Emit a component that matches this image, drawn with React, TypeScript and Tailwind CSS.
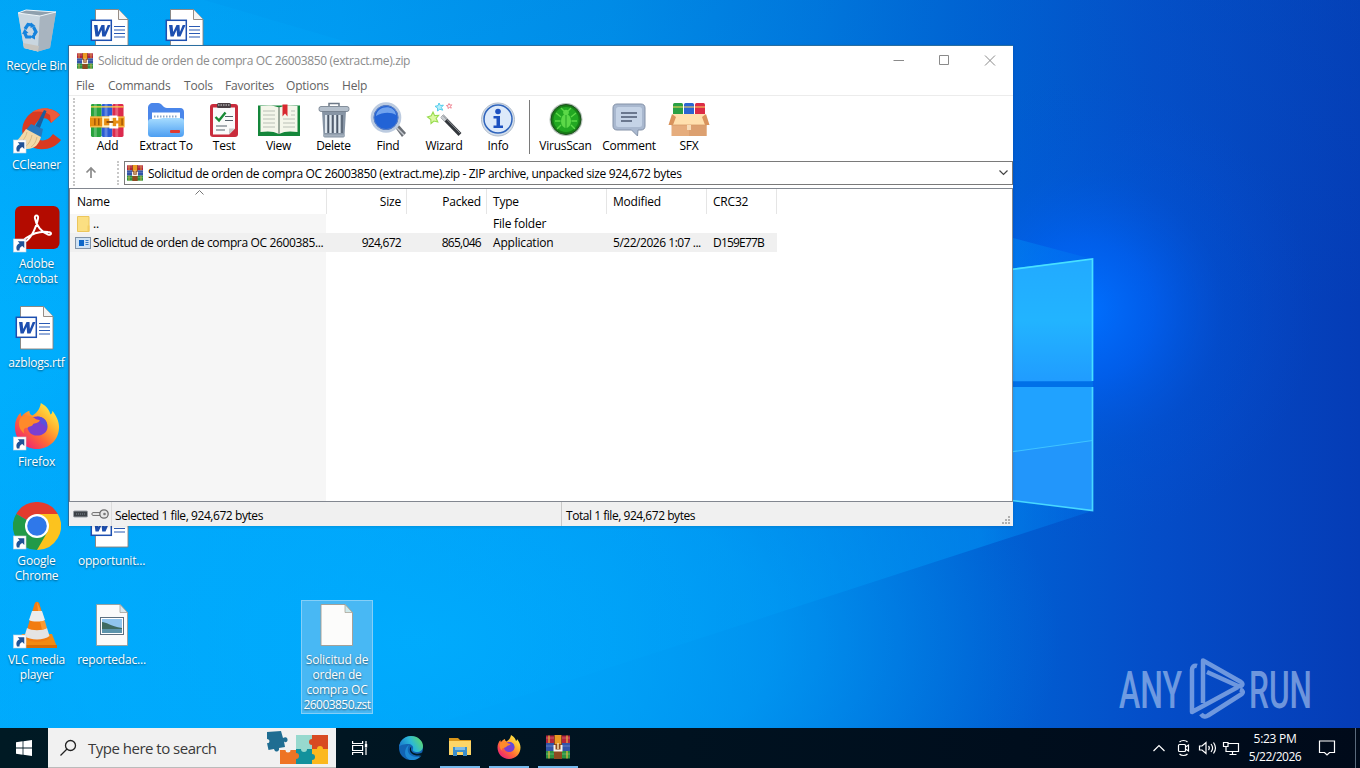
import type { ReactNode } from 'react';

/* ---------- desktop icons ---------- */

function Shortcut() {
  return (
    <g>
      <rect x="0.5" y="34" width="12.5" height="13" fill="#fff" stroke="#c8d4e0" strokeWidth="0.6" />
      <path d="M4 45.500c-1.500-4 .2-6 2.600-7.200L4.700 36.300h6.600v6.600l-2-2C7.300 41.800 6.300 43 6.500 45.500z" fill="#1f5296" />
    </g>
  );
}

function RecycleBin() {
  return (
    <svg width="48" height="48" viewBox="0 0 48 48">
      <path d="M5 6l8-3 30 2-6 36-12 3.500L11 41z" fill="#b9c6d2" opacity="0.9" />
      <path d="M5 6l22 3-2 35.500L11 41z" fill="#c9d6e0" />
      <path d="M27 9l16-4-6 36-12 3.500z" fill="#a8b4bf" />
      <path d="M5 6l8-3 30 2-16 4z" fill="#8fa0ae" />
      <path d="M5 6l8-3 30 2-16 4z" fill="none" stroke="#eef4f8" strokeWidth="1" />
      <path d="M10 36l16 3-1 5.500L11 41z" fill="#c6c4bf" />
      <g fill="none" stroke="#1583dd" strokeWidth="3.200">
        <path d="M12 22l3-4.500 4 .5" />
        <path d="M20.500 20l2.500 5-2 3" />
        <path d="M18 30h-4.500l-2-4.500" />
      </g>
      <path d="M18 15.500l4.500 3.500-5 2zM22 26l-5 4 5 2.500zM9 27l2.500-5 4 4z" fill="#1583dd" />
    </svg>
  );
}

function CCleaner() {
  return (
    <svg width="48" height="48" viewBox="0 0 48 48">
      <path d="M47 9C40 0 23 0 14 11c-7 9-6 20 1 27 8 8 25 7 33-4l-8-6c-6 8-13 8-17 3-4-6-2-13 3-17 5-3 9-2 12 3z" fill="#d93a20" />
      <path d="M47 9C40 1 28 0 19 6c5-1 14-1 18 3l1 8z" fill="#ee5c3a" />
      <path d="M31 4l2.500 1-7 18-4.500-2z" fill="#1c5d9c" />
      <path d="M18 18l12 5-2 9-15-8z" fill="#2878bd" />
      <path d="M13 23l15 8c-2 7-6 12-14 12-5 0-10-2-13-6 5-3 8-9 12-14z" fill="#f2d9a8" />
      <path d="M14 26c-1 5-4 9-8 12M19 29c-1 5-3 9-7 12M24 31c-1 5-3 8-6 10" stroke="#d8bb85" strokeWidth="1" fill="none" />
      <Shortcut />
    </svg>
  );
}

function Acrobat() {
  return (
    <svg width="48" height="48" viewBox="0 0 48 48">
      <rect x="2" y="1" width="44.500" height="43" rx="6" fill="#b30b00" />
      <path
        d="M13 33c-3 2-2 4.500 1 2.500 5-4 10-15 11-22 1-4-4-4-3 0 1 7 7 14 13 16 4 1 4-2.500 0-2.500-7-1-16 2-22 6z"
        fill="none"
        stroke="#fff"
        strokeWidth="2"
      />
      <Shortcut />
    </svg>
  );
}

function WordDoc() {
  return (
    <svg width="48" height="48" viewBox="0 0 48 48">
      <path d="M7.500 2.500h23l9.500 10v32.500H7.500z" fill="#fff" stroke="#8a8078" strokeWidth="0.900" />
      <path d="M30.500 2.500v10H40" fill="#f4f4f4" stroke="#8a8078" strokeWidth="0.900" />
      <path d="M26 19.500h11M26 23h11M26 26.500h11M26 30h11" stroke="#2a5ab4" strokeWidth="1.200" />
      <rect x="3.300" y="13.300" width="20" height="20" fill="#fff" stroke="#1d4fb0" strokeWidth="1.500" />
      <path d="M6 18h3.500l.7 7 3.300-7h3l.4 7 2.800-7H22.500l-5 11.500h-3.300l-.6-6.500-3 6.500H7.500z" fill="#1d4fb0" />
    </svg>
  );
}

function FirefoxLogo({ size }: { size: number }) {
  const id = `ff${size}`;
  return (
    <svg width={size} height={size} viewBox="0 0 48 48">
      <defs>
        <linearGradient id={id} x1="0.9" y1="0.1" x2="0.2" y2="0.9">
          <stop offset="0" stopColor="#fff04a" />
          <stop offset="0.35" stopColor="#ffb02e" />
          <stop offset="0.65" stopColor="#ff6a36" />
          <stop offset="1" stopColor="#f0286f" />
        </linearGradient>
      </defs>
      <path d="M28 0c7 4 9 8 10 12 2-1 2-3 2-4 4 5 7 11 7 17 0 13-10 23-23 23S1 38 1 25c0-6 2-11 6-15 0 2 0 3 1 4 2-3 5-5 8-6 0 3 1 4 3 5 4-2 8-6 9-13z" fill={`url(#${id})`} />
      <path d="M24 14c7 0 11 5 11 10.500S30.500 34 24 34s-10-4.500-10-10 4-10 10-10z" fill="#7a3fd0" />
      <path d="M24 14c8 0 12 6 10 13-1-3-3-5-6-6 0-3-2-5-4-7z" fill="#5a50dc" />
      <path d="M7 15c5-3 12-2 16 2l4 1c-1 3-6 3-7 4-1 3-4 2-6 4-3-1-5 2-3 6-5-4-8-10-4-17z" fill="#ff8a2a" />
    </svg>
  );
}

function Firefox() {
  return (
    <div className="relative h-12 w-12">
      <div className="pl-px">
        <FirefoxLogo size={46} />
      </div>
      <svg className="absolute top-0 left-0" width="48" height="48" viewBox="0 0 48 48">
        <Shortcut />
      </svg>
    </div>
  );
}

function Chrome() {
  return (
    <svg width="48" height="48" viewBox="0 0 48 48">
      <path d="M24 24L3.200 12A24 24 0 0 1 44.800 12z" fill="#e33b2e" />
      <path d="M24 24h-1L44.800 12A24 24 0 0 1 24 48l-2-4z" fill="#fcc31e" />
      <path d="M24 24l10.400 6L24 48A24 24 0 0 1 3.200 12z" fill="#229a48" />
      <path d="M24 12h20.800L34 30z" fill="#fcc31e" />
      <circle cx="24" cy="24" r="12" fill="#fff" />
      <circle cx="24" cy="24" r="9.800" fill="#2f78ea" />
      <Shortcut />
    </svg>
  );
}

function Vlc() {
  return (
    <svg width="48" height="48" viewBox="0 0 48 48">
      <path d="M9 33h30l5 13H3z" fill="#f28a12" />
      <path d="M3 44h41v3H3z" fill="#d86c05" />
      <path d="M21.500 3c1-3 4-3 5 0l10 34c-4 5-21 5-25 0z" fill="#f27c10" />
      <path d="M19 10h10l3 9c-3 2-13 2-16 0z" fill="#ececec" />
      <path d="M14 27c5 3 15 3 20 0l2.500 8c-5 4.500-20 4.500-25 0z" fill="#e4e4e4" />
      <path d="M24 1l4 9h-3zM27 20h5l2 7-5 2z" fill="#ffa640" opacity="0.7" />
      <Shortcut />
    </svg>
  );
}

function PicturePage() {
  return (
    <svg width="48" height="48" viewBox="0 0 48 48">
      <path d="M8.500 3.500h23.500l7.500 8v33h-31z" fill="#fafafa" stroke="#9a958e" strokeWidth="0.800" />
      <path d="M32 3.500v8h7.500z" fill="#d7e8ee" stroke="#9a958e" strokeWidth="0.700" />
      <rect x="12.500" y="16.500" width="23" height="17" fill="#fff" stroke="#5c6f80" strokeWidth="1" />
      <rect x="14" y="18" width="20" height="14" fill="#8fc4ee" />
      <path d="M14 21c4 0 8 4 20 6v2H14z" fill="#3e6a62" />
      <path d="M14 28h20v4H14z" fill="#5b93ab" />
    </svg>
  );
}

function BlankPage() {
  return (
    <svg width="48" height="48" viewBox="0 0 48 48">
      <path d="M8 3.500h24l7.500 8v33H8z" fill="#fcfcfb" stroke="#a39b8e" strokeWidth="0.900" />
      <path d="M32 3.500v8h7.500z" fill="#cfe9ea" stroke="#a39b8e" strokeWidth="0.700" />
    </svg>
  );
}

const desktopIcons: { cell: string; label: string[]; icon: ReactNode }[] = [
  { cell: 'col-start-1 row-start-1', label: ['Recycle Bin'], icon: <RecycleBin /> },
  { cell: 'col-start-1 row-start-2', label: ['CCleaner'], icon: <CCleaner /> },
  { cell: 'col-start-1 row-start-3', label: ['Adobe', 'Acrobat'], icon: <Acrobat /> },
  { cell: 'col-start-1 row-start-4', label: ['azblogs.rtf'], icon: <WordDoc /> },
  { cell: 'col-start-1 row-start-5', label: ['Firefox'], icon: <Firefox /> },
  { cell: 'col-start-1 row-start-6', label: ['Google', 'Chrome'], icon: <Chrome /> },
  { cell: 'col-start-1 row-start-7', label: ['VLC media', 'player'], icon: <Vlc /> },
  { cell: 'col-start-2 row-start-1', label: [], icon: <WordDoc /> },
  { cell: 'col-start-3 row-start-1', label: [], icon: <WordDoc /> },
  { cell: 'col-start-2 row-start-6', label: ['opportunit...'], icon: <WordDoc /> },
  { cell: 'col-start-2 row-start-7', label: ['reportedac...'], icon: <PicturePage /> },
];

/* ---------- wallpaper ---------- */

function Wallpaper() {
  return (
    <svg className="absolute inset-0" width="1360" height="768" viewBox="0 0 1360 768">
      <defs>
        <linearGradient id="base" x1="0" y1="0" x2="1" y2="0">
          <stop offset="0" stopColor="#00adfd" />
          <stop offset="0.25" stopColor="#00a3f8" />
          <stop offset="0.45" stopColor="#0092ec" />
          <stop offset="0.6" stopColor="#007ae0" />
          <stop offset="0.72" stopColor="#0062d4" />
          <stop offset="0.85" stopColor="#044dc8" />
          <stop offset="1" stopColor="#053cb6" />
        </linearGradient>
        <linearGradient id="shade" x1="0" y1="0" x2="0" y2="1">
          <stop offset="0" stopColor="#0060c0" stopOpacity="0.14" />
          <stop offset="0.4" stopColor="#0060c0" stopOpacity="0" />
        </linearGradient>
        <radialGradient id="floor" cx="0" cy="0" r="1" gradientUnits="userSpaceOnUse" gradientTransform="translate(420 640) scale(640 330)">
          <stop offset="0" stopColor="#00adff" stopOpacity="0.8" />
          <stop offset="0.55" stopColor="#00a6fc" stopOpacity="0.5" />
          <stop offset="1" stopColor="#0090f0" stopOpacity="0" />
        </radialGradient>
        <radialGradient id="glow" cx="1085" cy="310" r="230" gradientUnits="userSpaceOnUse">
          <stop offset="0" stopColor="#0070ff" />
          <stop offset="0.3" stopColor="#0064fa" stopOpacity="0.65" />
          <stop offset="0.6" stopColor="#0058e4" stopOpacity="0.22" />
          <stop offset="1" stopColor="#0050d8" stopOpacity="0" />
        </radialGradient>
        <linearGradient id="beam" x1="0" y1="0" x2="1090" y2="0" gradientUnits="userSpaceOnUse">
          <stop offset="0" stopColor="#00b4ff" stopOpacity="0.2" />
          <stop offset="0.4" stopColor="#00b0ff" stopOpacity="0.12" />
          <stop offset="0.7" stopColor="#00a4fa" stopOpacity="0.25" />
          <stop offset="0.9" stopColor="#0098f8" stopOpacity="0.5" />
          <stop offset="1" stopColor="#0078f0" stopOpacity="0.35" />
        </linearGradient>
        <linearGradient id="paneTop" x1="0" y1="0" x2="0" y2="1">
          <stop offset="0" stopColor="#22aaff" />
          <stop offset="0.5" stopColor="#22b4ff" />
          <stop offset="1" stopColor="#209cff" />
        </linearGradient>
      </defs>
      <rect width="1360" height="768" fill="url(#base)" />
      <rect width="1360" height="768" fill="url(#shade)" />
      <rect width="1360" height="768" fill="url(#floor)" />
      <rect width="1360" height="768" fill="url(#glow)" />
      <path d="M0 -60L1013 238 1092 259V511L300 768H0z" fill="url(#beam)" />
      <path d="M1000 270l92.500-11v122.500H1000z" fill="url(#paneTop)" />
      <path d="M1000 387h92.500v123.500L1000 499z" fill="#20a2ff" />
      <path d="M1000 453.500l92.500-13v70L1000 499z" fill="#2296fb" />
      <path d="M1000 453.500l92.500-13" stroke="#3fc4ff" strokeWidth="1.200" />
      <path d="M1000 381.500h93v5.500h-93z" fill="#0070e8" />
      <path d="M1000 271l92.500-12v122" fill="none" stroke="#48e0ff" strokeWidth="1.700" />
      <path d="M1092.500 387v123.500L1000 499" fill="none" stroke="#48d8ff" strokeWidth="1.700" />
    </svg>
  );
}

function AnyRun() {
  return (
    <svg className="absolute top-[640px] left-[1100px] overflow-visible opacity-60" width="240" height="88" viewBox="1100 640 240 88">
      <g fill="#b5cdf2" fontFamily="Roboto, sans-serif" fontSize="52" fontWeight="500" letterSpacing="0">
        <text x="1119" y="707.500" textLength="63" lengthAdjust="spacingAndGlyphs">ANY</text>
        <text x="1249" y="707.500" textLength="63" lengthAdjust="spacingAndGlyphs">RUN</text>
      </g>
      <g fill="none" stroke="#b5cdf2" strokeWidth="4.500" strokeLinejoin="round">
        <path d="M1197 666c-3-1-5 1-5 4v42l46-25" />
        <path d="M1203 703v-42.500l38 21.500c3 2 1 5-3 4l-31-14" />
        <path d="M1201 714c2 3 5 3 7 1.500l33-21c3-2 2-4-1-5" />
      </g>
    </svg>
  );
}

/* ---------- toolbar icons ---------- */

function Books() {
  return (
    <svg width="35" height="35" viewBox="0 0 36 36">
      <rect x="1" y="1" width="11" height="34" rx="1.500" fill="#27a33d" />
      <rect x="12" y="1" width="11" height="34" rx="1.500" fill="#2a5cd6" />
      <rect x="23" y="1" width="11.500" height="34" rx="1.500" fill="#dc2a4d" />
      <path d="M4 1h3v34H4zM15 1h3v34h-3zM26 1h3v34h-3z" fill="#fff" opacity="0.25" />
      <path d="M1 4h11M12 4h11M23 4h11.500" stroke="#ffd54a" strokeWidth="1.300" />
      <path d="M0 14h35.500v11H0z" fill="#e88f12" />
      <path d="M0 14.500h35.500M0 24.500h35.500" stroke="#ffd36a" strokeWidth="1" />
      <path d="M5 16v7M9 16v7M33 16v7" stroke="#a45706" strokeWidth="1.500" />
      <rect x="13.500" y="15" width="9" height="9" fill="none" stroke="#fff2c2" strokeWidth="2" />
      <path d="M28 14h-7v11h7v-4M28 14v4" fill="none" stroke="#fff" strokeWidth="2.200" />
      <path d="M17 19.500h7" stroke="#8d4d0a" strokeWidth="2" />
    </svg>
  );
}

function ExtractFolder() {
  return (
    <svg width="38" height="36" viewBox="0 0 38 36">
      <defs>
        <linearGradient id="folderFront" x1="0" y1="0" x2="0" y2="1">
          <stop offset="0" stopColor="#a6dcff" />
          <stop offset="1" stopColor="#4c9ef2" />
        </linearGradient>
      </defs>
      <path d="M1 6c0-3 2-5 5-5h5c4 0 5 5 9 5h13c3 0 4 2 4 4v20H1z" fill="#4a86ea" />
      <path d="M5 10.500h28v12H5z" fill="#fff" />
      <path d="M7 14.500h24" stroke="#8ba6c6" strokeWidth="2" strokeDasharray="1.500 1.500" />
      <path d="M1 20c0-2 1-3 3-3h7c2 0 3-1 5-1h17c3 0 4 1 4 3v12c0 3-1.500 4-4 4H5c-3 0-4-1-4-4z" fill="url(#folderFront)" />
      <rect x="23" y="28" width="10" height="3" rx="1" fill="#e03a30" />
    </svg>
  );
}

function TestBoard() {
  return (
    <svg width="30" height="36" viewBox="0 0 30 36">
      <rect x="1" y="2" width="28" height="33" rx="3" fill="#c92c3c" />
      <path d="M4 5.500h22v21l-6 6H4z" fill="#fafafa" />
      <path d="M20 32.500v-6h6z" fill="#c9c9c9" />
      <rect x="8" y="1" width="14" height="5" rx="1.500" fill="#4a4044" />
      <path d="M9 3h12" stroke="#d8d8d8" strokeWidth="1" strokeDasharray="1.500 1" />
      <path d="M6.500 15l3.500 3.500 6.500-8" fill="none" stroke="#188a34" strokeWidth="2.400" />
      <path d="M16 14.500h8M16 18.500h8M7 24h11M7 28h9" stroke="#55606a" strokeWidth="1.100" />
    </svg>
  );
}

function OpenBook() {
  return (
    <svg width="44" height="36" viewBox="0 0 44 36">
      <path d="M1 3.500h42V34H1z" fill="#14863a" />
      <path d="M3.500 4c7-1 13-1 18.500 1.500C27.500 3 33.500 3 40.500 4v26c-7-1-13-1-18.500 2-5.500-3-11.500-3-18.500-2z" fill="#f4f6ea" />
      <path d="M22 5v27" stroke="#7f8f80" strokeWidth="1.500" />
      <path d="M6 9h12M6 13h12M6 17h12M6 21h12M6 25h12M34 9h4M34 13h4M26 17h12M26 21h12M26 25h12" stroke="#b9bfb5" strokeWidth="1.100" />
      <path d="M25.500 2.500h5v12l-2.500-3-2.500 3z" fill="#d8282f" />
    </svg>
  );
}

function TrashCan() {
  return (
    <svg width="32" height="36" viewBox="0 0 32 36">
      <path d="M4 9h24l-1.500 25c0 1-1 1.500-2 1.500h-17c-1 0-2-.5-2-1.500z" fill="#8795a5" />
      <path d="M8 13v18M12.500 13v18M17 13v18M21.500 13v18" stroke="#dfe7ee" strokeWidth="2" />
      <path d="M10.300 13v18M14.800 13v18M19.300 13v18M24 13v18" stroke="#475261" strokeWidth="1.200" />
      <rect x="1" y="4.500" width="30" height="5" rx="2" fill="#b4bfcb" stroke="#6e7a88" strokeWidth="0.800" />
      <path d="M11 4V1.500h10V4" fill="none" stroke="#6d7987" strokeWidth="1.500" />
      <path d="M5 33.500h22" stroke="#a4b0bd" strokeWidth="2" />
    </svg>
  );
}

function FindLens() {
  return (
    <svg width="38" height="36" viewBox="0 0 38 36">
      <path d="M25 24l4-2 8 9-4 4z" fill="#6a6f76" />
      <path d="M27 25l8 8" stroke="#c5cad0" strokeWidth="1.500" />
      <circle cx="17" cy="15.500" r="13.800" fill="#2a66d2" stroke="#bccbe0" strokeWidth="3" />
      <circle cx="17" cy="15.500" r="12" fill="#2263d6" stroke="#5c80c4" strokeWidth="1" />
      <path d="M7 14c1-11 19-12 20-1-5-3-13-3-20 1z" fill="#8cb8f6" opacity="0.75" />
    </svg>
  );
}

function Wand() {
  return (
    <svg width="38" height="36" viewBox="0 0 38 36">
      <path d="M17 14l18 18.500" stroke="#33373c" strokeWidth="4" />
      <path d="M17 14l4 4" stroke="#c8ccd0" strokeWidth="4" />
      <path d="M18 13.500l17 17.500" stroke="#8a8e94" strokeWidth="1" />
      <path d="M8 10l1.600 3.600 4-.3-2.500 3 1.700 3.700-3.900-1L6 21.500l-.2-4L2.500 15l3.700-1.200z" fill="#dcf9a2" stroke="#98dc50" strokeWidth="1.100" />
      <path d="M14 1l1.400 2.600 3-.5-2 2.300 1.300 2.800-2.900-1L12.500 9l.1-3L10 4.300l3-.6z" fill="#b6effc" stroke="#55cdec" strokeWidth="1" />
      <path d="M24 1.500l.8 1.600 2-.3-1.300 1.500.8 1.800-1.900-.7L23 6.500l.1-1.900-1.700-1 1.900-.4z" fill="#fff" stroke="#ee7a8a" strokeWidth="0.900" />
    </svg>
  );
}

function InfoBall() {
  return (
    <svg width="36" height="36" viewBox="0 0 36 36">
      <circle cx="18" cy="17.500" r="16.500" fill="#d4dfec" stroke="#b2bdcb" strokeWidth="1" />
      <circle cx="18" cy="17" r="14" fill="#dce9fa" stroke="#2f64bc" strokeWidth="1.500" />
      <circle cx="18" cy="9.500" r="2.800" fill="#1c50c0" />
      <path d="M13.500 14h6.500v9.500h3V26H13.500v-2.500h3V16.500h-3z" fill="#1c50c0" />
    </svg>
  );
}

function VirusBall() {
  return (
    <svg width="36" height="36" viewBox="0 0 36 36">
      <circle cx="18" cy="17.500" r="16.500" fill="#b6c2ba" />
      <circle cx="18" cy="17.500" r="15" fill="#177e17" stroke="#1c4c1c" strokeWidth="1" />
      <circle cx="18" cy="17.500" r="12.500" fill="#22a822" />
      <ellipse cx="18" cy="19" rx="5" ry="7" fill="#5cd848" />
      <circle cx="18" cy="10.500" r="2.800" fill="#5cd848" />
      <path d="M13 15l-5-4M12.500 19H7M13 23l-4 4M23 15l5-4M23.500 19H29M23 23l4 4M16 9l-3-3M20 9l3-3" stroke="#5cd848" strokeWidth="1.400" />
      <path d="M18 13v13" stroke="#22a022" strokeWidth="1" />
    </svg>
  );
}

function CommentBubble() {
  return (
    <svg width="34" height="36" viewBox="0 0 34 36">
      <path d="M5 2h24c2.500 0 4 1.500 4 4v18c0 2.500-1.500 4-4 4h-3l-.5 6-6-6H5c-2.500 0-4-1.500-4-4V6c0-2.500 1.500-4 4-4z" fill="#a9b8cf" stroke="#8492a8" strokeWidth="1" />
      <rect x="4" y="5" width="26" height="20" rx="2.500" fill="#c5d3e6" />
      <path d="M9 11h16M9 15h16M9 19h11" stroke="#4c5a72" strokeWidth="1.500" />
    </svg>
  );
}

function SfxBox() {
  return (
    <svg width="42" height="36" viewBox="0 0 42 36">
      <rect x="5" y="1" width="10" height="18" rx="1.500" fill="#2aa044" />
      <rect x="16" y="1" width="10" height="18" rx="1.500" fill="#2b66d2" />
      <rect x="27" y="1" width="10" height="18" rx="1.500" fill="#dc2c46" />
      <path d="M5 5h10M16 5h10M27 5h10" stroke="#ffd558" strokeWidth="1.200" />
      <path d="M3.500 17h35v17h-35z" fill="#e6ad7d" />
      <path d="M21 17h17.500v17H21z" fill="#dca070" />
      <path d="M5 12h32v11H5z" fill="#ffe0ae" />
      <path d="M4 12L0.500 23H5l3-8zM38 12l3.500 11H37l-3-8z" fill="#d9935c" />
      <path d="M3.500 23h35" stroke="#d69a68" strokeWidth="0.800" />
      <path d="M19 23h4v5h-4z" fill="#f7dcb8" />
    </svg>
  );
}

function RarIcon({ size }: { size: number }) {
  return (
    <svg className="shrink-0" width={size} height={size} viewBox="0 0 24 24">
      <rect x="0" y="0.500" width="24" height="7.500" fill="#b3243d" />
      <rect x="0" y="8" width="24" height="8" fill="#3254a8" />
      <rect x="0" y="16" width="24" height="7.500" fill="#2c9440" />
      <path d="M0 3h24M0 11h24M0 19h24" stroke="#fff" strokeWidth="1.200" opacity="0.25" />
      <path d="M3 .5V8M21 .5V8M3 16v7.500M21 16v7.500" stroke="#e8b53c" strokeWidth="1.200" />
      <rect x="8" y="0" width="8" height="24" fill="#8e4a20" />
      <rect x="9" y="0" width="6" height="9" fill="#ec9a22" />
      <path d="M8.500 10v5.500h7V10" fill="none" stroke="#f6f0e6" strokeWidth="2" />
      <path d="M12 8v6" stroke="#f6d9a0" strokeWidth="1.600" />
    </svg>
  );
}

const tools: { label: string; width: string; icon: ReactNode }[] = [
  { label: 'Add', width: 'w-[51px]', icon: <Books /> },
  { label: 'Extract To', width: 'w-[66px]', icon: <ExtractFolder /> },
  { label: 'Test', width: 'w-[50px]', icon: <TestBoard /> },
  { label: 'View', width: 'w-[59px]', icon: <OpenBook /> },
  { label: 'Delete', width: 'w-[51px]', icon: <TrashCan /> },
  { label: 'Find', width: 'w-[58px]', icon: <FindLens /> },
  { label: 'Wizard', width: 'w-[54px]', icon: <Wand /> },
  { label: 'Info', width: 'w-[54px]', icon: <InfoBall /> },
];

const moreTools: { label: string; width: string; icon: ReactNode }[] = [
  { label: 'VirusScan', width: 'w-[63px]', icon: <VirusBall /> },
  { label: 'Comment', width: 'w-[64px]', icon: <CommentBubble /> },
  { label: 'SFX', width: 'w-[56px]', icon: <SfxBox /> },
];

function Tool({ label, width, icon }: { label: string; width: string; icon: ReactNode }) {
  return (
    <div className={`flex shrink-0 flex-col items-center whitespace-nowrap ${width}`}>
      <div className="flex h-9 items-center">{icon}</div>
      <span className="leading-4 tracking-[-0.25px]">{label}</span>
    </div>
  );
}

const menu = [
  { label: 'File', width: 'w-8' },
  { label: 'Commands', width: 'w-[76px]' },
  { label: 'Tools', width: 'w-[41px]' },
  { label: 'Favorites', width: 'w-[61px]' },
  { label: 'Options', width: 'w-14' },
  { label: 'Help', width: 'w-10' },
];

const columns = 'grid grid-cols-[257px_80px_80px_120px_100px_70px]';

function RarWindow() {
  return (
    <div className="absolute top-[45px] left-[68px] flex h-[481px] w-[945px] flex-col border border-r-0 border-b-0 border-[#2a6ea0] bg-white text-black shadow-[0_1px_3px_rgba(0,0,0,0.12)]">
      <div className="flex h-[30px] shrink-0 items-center pl-2">
        <RarIcon size={16} />
        <span className="ml-[5px] tracking-[-0.35px] text-[#8c8c8c]">Solicitud de orden de compra OC 26003850 (extract.me).zip</span>
        <svg className="ml-auto" width="138" height="28" viewBox="0 0 138 28" fill="none" stroke="#8a8a8a">
          <path d="M18.500 13.500h10.500M64.500 8.500h9v9h-9zM110 8.500l10 10M120 8.500l-10 10" />
        </svg>
      </div>
      <div className="flex h-5 shrink-0 items-center border-b border-[#ececec] pl-[7px] leading-[20px] text-[#626262]">
        {menu.map((m) => (
          <span key={m.label} className={m.width}>{m.label}</span>
        ))}
      </div>

      <div className="flex h-[92px] shrink-0 pl-1">
        <div className="my-0.5 w-[2px] border-l-2 border-dotted border-[#c8c8c8]" />
        <div className="flex grow flex-col">
          <div className="flex h-[62px] pt-[6px] pl-[7px]">
            {tools.map((t) => (
              <Tool key={t.label} {...t} />
            ))}
            <div className="mx-[4px] -mt-0.5 h-[54px] w-px bg-[#7a7a7a]" />
            {moreTools.map((t) => (
              <Tool key={t.label} {...t} />
            ))}
          </div>
          <div className="flex h-[30px] items-start pt-[3px]">
            <svg className="mt-[5px] ml-[10px]" width="12" height="13" viewBox="0 0 12 13" fill="none" stroke="#8a8a8a" strokeWidth="1.700">
              <path d="M6 12V2M1.500 6.500L6 2l4.500 4.500" />
            </svg>
            <div className="ml-5 h-6 border-l-2 border-dotted border-[#c8c8c8]" />
            <div className="ml-[5px] flex h-6 grow items-center border border-[#7a7a7a] pr-[4px] pl-[2px]">
              <RarIcon size={16} />
              <span className="mt-px ml-[5px] tracking-[-0.355px] whitespace-nowrap">
                Solicitud de orden de compra OC 26003850 (extract.me).zip - ZIP archive, unpacked size 924,672 bytes
              </span>
              <svg className="ml-auto" width="9" height="6" viewBox="0 0 9 6" fill="none" stroke="#444" strokeWidth="1.200">
                <path d="M.5.5l4 4 4-4" />
              </svg>
            </div>
          </div>
        </div>
      </div>

      <div className="flex grow flex-col border border-[#828790]">
        <div className="relative h-[25px]">
          <svg className="absolute top-[1px] left-[125px]" width="9" height="5" viewBox="0 0 9 5" fill="none" stroke="#777">
            <path d="M.5 4.500l4-4 4 4" />
          </svg>
          <div className={`${columns} h-full w-[707px] items-center leading-[25px] *:border-r *:border-[#e5e5e5]`}>
            <span className="pl-[7px]">Name</span>
            <span className="pr-[5px] text-right">Size</span>
            <span className="pr-[5px] text-right">Packed</span>
            <span className="pl-[6px]">Type</span>
            <span className="pl-[6px]">Modified</span>
            <span className="pl-[6px]">CRC32</span>
          </div>
        </div>
        <div className={`${columns} h-[19px] w-[707px] items-center`}>
          <span className="mr-px flex h-full items-center gap-[3px] bg-[#f6f6f6] pl-[7px]">
            <svg width="13" height="16" viewBox="0 0 13 16">
              <path d="M.5.500h11.500v15H.5z" fill="#fbdf82" stroke="#ecc65c" />
              <path d="M10.500 9.500h2v6h-2z" fill="#f3cd62" />
            </svg>
            ..
          </span>
          <span />
          <span />
          <span className="pl-[6px]">File folder</span>
        </div>
        <div className={`${columns} h-[19px] w-[707px] items-center bg-[#f0f0f0]`}>
          <span className="flex items-center gap-[2px] pl-[5px] tracking-[-0.36px] whitespace-nowrap">
            <svg className="shrink-0" width="16" height="12" viewBox="0 0 16 12">
              <rect x="0.500" y="0.500" width="15" height="11" fill="#cfe2f4" stroke="#8092a6" />
              <rect x="4" y="3" width="5" height="6" fill="#0b66c8" />
              <path d="M10.500 3.500h3M10.500 5.500h3M10.500 7.500h3" stroke="#3a7cc4" />
            </svg>
            Solicitud de orden de compra OC 2600385...
          </span>
          <span className="pr-[6px] text-right tracking-[-0.7px]">924,672</span>
          <span className="pr-[6px] text-right tracking-[-0.7px]">865,046</span>
          <span className="pl-[6px]">Application</span>
          <span className="pl-[6px] tracking-[-0.47px] whitespace-nowrap">5/22/2026 1:07 ...</span>
          <span className="pl-[6px] tracking-[-0.8px]">D159E77B</span>
        </div>
        <div className="w-[256px] grow bg-[#f6f6f6]" />
      </div>

      <div className="flex h-6 shrink-0 items-center bg-[#f0f0f0]">
        <svg className="ml-1" width="37" height="14" viewBox="0 0 37 14">
          <rect x="0.500" y="4" width="14" height="6" rx="1" fill="#3c4146" stroke="#9a9fa4" />
          <path d="M3 7h9" stroke="#7f8890" strokeDasharray="1 1" />
          <path d="M20 5.500h8v3h-8c-1.500 0-1.500-3 0-3z" fill="#e3e3e3" stroke="#777" />
          <circle cx="31" cy="7" r="4.200" fill="#e8e8e8" stroke="#6d6d6d" strokeWidth="1.300" />
          <circle cx="31.500" cy="7" r="1.300" fill="#777" />
        </svg>
        <div className="ml-px h-full border-l border-[#dcdcdc]" />
        <span className="w-[449px] shrink-0 pt-1 pl-[3px] tracking-[-0.43px]">Selected 1 file, 924,672 bytes</span>
        <div className="h-full border-l border-[#c9c9c9]" />
        <span className="pt-1 pl-1 tracking-[-0.46px]">Total 1 file, 924,672 bytes</span>
        <svg className="mt-auto mr-0.5 mb-px ml-auto" width="9" height="9" viewBox="0 0 9 9" fill="#b0b0b0">
          <path d="M6 0h2v2H6zM3 3h2v2H3zM6 3h2v2H6zM0 6h2v2H0zM3 6h2v2H3zM6 6h2v2H6z" />
        </svg>
      </div>
    </div>
  );
}

/* ---------- taskbar ---------- */

function PuzzleArt() {
  return (
    <svg width="64" height="36" viewBox="0 0 64 36">
      <path d="M14 20h17v14H14z" fill="#ee7424" />
      <path d="M30 5h16v15H30z" fill="#97d9ce" />
      <path d="M46 5h16v15H46z" fill="#d84a22" />
      <path d="M30 19h16v15H30z" fill="#12919c" />
      <path d="M46 19h16v15H46z" fill="#fbb81e" />
      <circle cx="38" cy="19" r="3" fill="#97d9ce" />
      <circle cx="46" cy="12" r="3" fill="#d84a22" />
      <circle cx="54" cy="19" r="3" fill="#fbb81e" />
      <circle cx="46" cy="27" r="3" fill="#12919c" />
      <circle cx="30" cy="26" r="3" fill="#ee7424" />
      <circle cx="22" cy="20" r="2.500" fill="#f0f0f0" />
      <path d="M1 2l14-1 2 7c3-2 5 0 4.500 2.500-.5 2-2.500 2-3.500 1l1 5.500-6 1c1 4-4 5-5 1l-5.500 1L1 13c3 1 3.500-4 0-4z" fill="#1f6d92" />
    </svg>
  );
}

function EdgeLogo() {
  return (
    <svg width="24" height="24" viewBox="0 0 24 24">
      <defs>
        <linearGradient id="edge" x1="0" y1="0.6" x2="1" y2="0.2">
          <stop offset="0" stopColor="#1878cc" />
          <stop offset="0.5" stopColor="#2bb8d8" />
          <stop offset="1" stopColor="#62dc62" />
        </linearGradient>
      </defs>
      <circle cx="12" cy="12" r="12" fill="#1264b4" />
      <path d="M0 11C1 4 6 0 12 0c7 0 12 5 12 10 0 4-3 6-6 6-3 0-5-1-4-3 1-3-2-5-5-5C5 8 1 9 0 11z" fill="url(#edge)" />
      <path d="M10 9c-3 5-1 12 8 12 2 0 3-.4 4.500-1.500C20 23 16 24.500 12 24 5 23 4 13 10 9z" fill="#1c88d4" />
      <path d="M13 10c-2 2-1.500 6.500 3.500 7.500 3 .6 5.500 0 7-1.500l-1 3C17 21 9.500 18 11 12z" fill="#001a26" />
    </svg>
  );
}

function Explorer() {
  return (
    <svg width="22" height="20" viewBox="0 0 22 20">
      <path d="M0 1h9l2 2h11v15H0z" fill="#d9961a" />
      <path d="M0 4h22v14H0z" fill="#fcd567" />
      <path d="M4 19v-9h14v9h-4v-4H8v4z" fill="#3b8ecb" />
      <path d="M6 10h10v3H6z" fill="#7cbce8" />
    </svg>
  );
}

function Taskbar() {
  return (
    <div className="relative flex h-10 shrink-0 bg-gradient-to-r from-[#001a24] via-[#001220] to-[#000a1a] text-white">
      <div className="flex w-12 items-center justify-center">
        <svg width="16" height="16" viewBox="0 0 16 16" fill="#fff">
          <path d="M0 2.200l6.600-.9v6.300H0zM7.400 1.200L16 0v7.600H7.400zM0 8.400h6.600v6.300L0 13.800zM7.400 8.400H16V16l-8.600-1.200z" />
        </svg>
      </div>
      <div className="flex w-72 items-center border-b border-[#bbb] bg-[#f1f1f1] pl-3">
        <svg width="18" height="18" viewBox="0 0 18 18" fill="none" stroke="#222" strokeWidth="1.300">
          <circle cx="10.500" cy="6.500" r="5" />
          <path d="M7 10L.5 16.500" />
        </svg>
        <span className="ml-[10px] text-[15px] tracking-[-0.5px] whitespace-nowrap text-[#3a3a3a]">Type here to search</span>
        <div className="mr-[6px] ml-auto">
          <PuzzleArt />
        </div>
      </div>
      <div className="flex w-12 items-center justify-center">
        <svg width="16" height="16" viewBox="0 0 16 16" fill="none" stroke="#fff" strokeWidth="1.200">
          <path d="M.6 1v2.500h10V1M.6 15v-2.500h10V15M.6 5.500h10v5H.6zM14 1v3M14 8v7" />
          <path d="M14 4v3.500" strokeWidth="2.400" />
        </svg>
      </div>
      <div className="flex w-[54px] items-center justify-center">
        <EdgeLogo />
      </div>
      <div className="ml-[2px] flex w-10 items-center justify-center border-b-2 border-[#76b9ed]">
        <Explorer />
      </div>
      <div className="ml-[9px] flex w-10 items-center justify-center border-b-2 border-[#76b9ed]">
        <FirefoxLogo size={24} />
      </div>
      <div className="ml-[9px] flex w-10 items-center justify-center border-b-2 border-[#76b9ed]">
        <RarIcon size={24} />
      </div>

      <div className="ml-auto flex items-center">
        <svg width="90" height="20" viewBox="0 0 90 20" fill="none" stroke="#fff" strokeWidth="1.200">
          <path d="M1.500 13l5.500-5.500 5.500 5.500" />
          <rect x="26.500" y="6.500" width="7" height="7" rx="1" />
          <path d="M33.500 9l3-2v6l-3-2M27.500 4c2-2 6-2 8 0M27.500 16c2 2 6 2 8 0" />
          <path d="M47.500 8h2.500l4-3.500v11L50 12h-2.500z" />
          <path d="M56.500 8c1 1.200 1 2.800 0 4M59 6c2 2.500 2 5.500 0 8M61.500 4.500c2.500 3.500 2.500 7.500 0 11" />
          <path d="M76.500 5.500h10v8h-12.500v-5M80.500 13.500v3M77.500 16.500h7M71.500 4.500h4.500v4h-4.500z" />
        </svg>
        <div className="ml-[3px] flex w-[60px] flex-col items-center leading-[18px] whitespace-nowrap">
          <span className="tracking-[-0.3px]">5:23 PM</span>
          <span className="tracking-[-0.5px]">5/22/2026</span>
        </div>
        <svg className="ml-[13px]" width="18" height="18" viewBox="0 0 18 18" fill="none" stroke="#fff" strokeWidth="1.200">
          <path d="M1.500 2h15v11.500h-5L9 16l-2.500-2.500h-5z" />
        </svg>
        <div className="ml-[19px] h-10 w-[5px] border-l border-[#5a6a7c]" />
      </div>
    </div>
  );
}

export default function App() {
  return (
    <div className="flex h-[768px] w-[1360px] flex-col overflow-hidden font-['Open_Sans','Noto_Sans',sans-serif] text-xs tracking-[-0.2px]">
      <div className="relative h-[728px] overflow-hidden bg-[#0090ee]">
        <Wallpaper />
        <AnyRun />
        <div className="relative -ml-px grid auto-rows-[99px] grid-cols-[repeat(5,75px)] pt-[7px] text-white">
          {desktopIcons.map((d, i) => (
            <div key={i} className={`flex flex-col items-center whitespace-nowrap ${d.cell}`}>
              {d.icon}
              <div className="mt-[3px] text-center leading-[15px] [text-shadow:0_1px_2px_rgba(0,0,0,0.55)]">
                {d.label.map((line) => (
                  <div key={line}>{line}</div>
                ))}
              </div>
            </div>
          ))}
          <div className="col-start-5 row-start-7 -mt-px mr-px ml-[2px] flex h-[114px] flex-col items-center border border-[#84cff8] bg-[#48b8f4] whitespace-nowrap">
            <BlankPage />
            <div className="mt-[3px] text-center leading-[15px] [text-shadow:0_1px_2px_rgba(0,0,0,0.55)]">
              <div>Solicitud de</div>
              <div>orden de</div>
              <div>compra OC</div>
              <div className="tracking-[-0.55px]">26003850.zst</div>
            </div>
          </div>
        </div>
        <RarWindow />
      </div>
      <Taskbar />
    </div>
  );
}
